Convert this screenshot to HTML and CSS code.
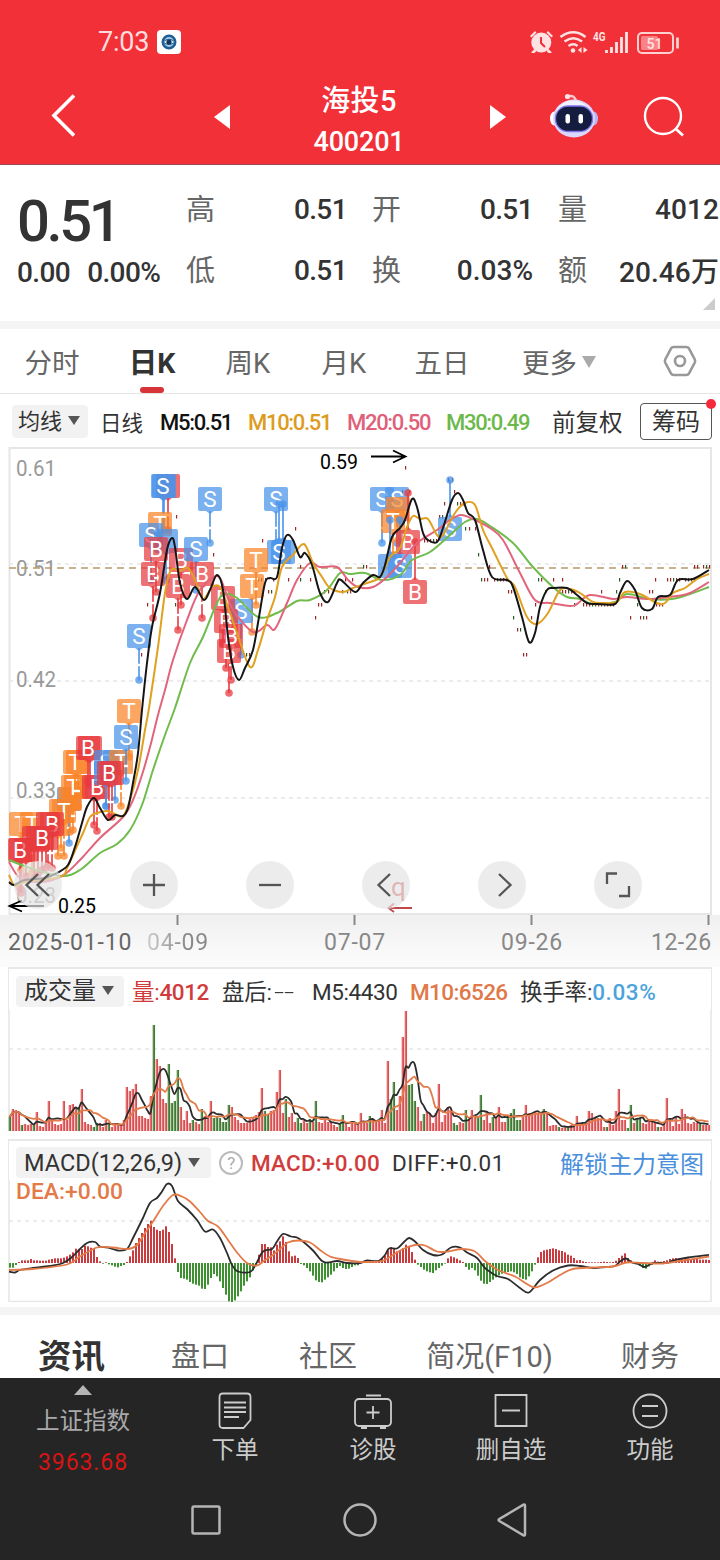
FILE: index.html
```html
<!DOCTYPE html>
<html lang="zh-CN">
<head>
    <meta charset="UTF-8">
    <meta name="viewport" content="width=device-width, initial-scale=1.0">
    <title>海投5 400201</title>
    <link rel="stylesheet" href="styles.css">
</head>
<body>
    <header class="top">
        <div class="status">
            <span class="clock">7:03</span>
            <svg class="app-badge" width="24" height="24" viewBox="0 0 24 24">
                <rect width="24" height="24" rx="4" fill="#fff"/>
                <circle cx="12" cy="12" r="6.2" fill="#a9cbe6" stroke="#1d5f94" stroke-width="2.6"/>
                <path d="M6 12q6-5.500 12 0q-6 5-12 0z" fill="#dbe9f5" stroke="#1d5f94"/>
                <circle cx="12" cy="12" r="2.600" fill="#12365c"/>
            </svg>
            <svg class="status-icons" width="150" height="26" viewBox="530 28 150 26">
                <g fill="#ffe3e3">
                    <circle cx="541.300" cy="41.500" r="10"/>
                    <path d="M530 35l5-5 1.500 1.500-5 5zM553 35l-5-5-1.500 1.500 5 5zM531.500 51l3-3 2 2-2 2h-3zM551.500 51l-3-3-2 2 2 2h3z"/>
                </g>
                <path d="M541 36v6l4 4" fill="none" stroke="#f23038" stroke-width="2"/>
                <g fill="none" stroke="#ffe3e3" stroke-width="2.600">
                    <path d="M560.500 36q13-9.500 25 0M564.500 40.500q9-6.500 17.500 0M568.500 45q5-3.500 9 0"/>
                </g>
                <circle cx="573" cy="49.500" r="2.300" fill="#ffe3e3"/>
                <path d="M578 49l3.500-3v6zM587.500 49l-4-3v6z" fill="#ffe3e3"/>
                <text x="593" y="39.500" class="net-label" textLength="12.500" lengthAdjust="spacingAndGlyphs">4G</text>
                <path d="M606.500 52v-3M611.500 52v-6M616.500 52v-11M621.500 52v-16M626.500 52v-21" stroke="#ffe3e3" stroke-width="2.800"/>
                <rect x="638" y="32" width="35" height="20" rx="4" fill="none" stroke="#ffd0d0" stroke-width="2"/>
                <rect x="641" y="35" width="17" height="14" rx="1.500" fill="#fb8388"/>
                <path d="M677.500 36.500v11" stroke="#ffd0d0" stroke-width="2.800"/>
                <text x="646.500" y="47.500" class="battery-label" textLength="16" lengthAdjust="spacingAndGlyphs">51</text>
            </svg>
        </div>
        <nav class="title-bar">
            <svg class="back" width="28" height="46" viewBox="0 0 28 46"><path d="M25 3.500L5 23.500 25 43.500" fill="none" stroke="#fff" stroke-width="3.600"/></svg>
            <svg width="16" height="24" viewBox="0 0 16 24"><path d="M16 0v24L0 12z" fill="#fff"/></svg>
            <div class="stock">
                <div class="stock-name">海投5</div>
                <div class="stock-code">400201</div>
            </div>
            <svg class="next" width="16" height="24" viewBox="0 0 16 24"><path d="M0 0v24l16-12z" fill="#fff"/></svg>
            <svg class="robot" width="50" height="46" viewBox="0 0 50 46">
                <path d="M19 4.500q7-2 8 5" fill="none" stroke="#ffc4cc" stroke-width="2.500"/>
                <circle cx="18.500" cy="4.500" r="2.600" fill="#ffe0e4"/>
                <ellipse cx="5.500" cy="26.500" rx="4.500" ry="7" fill="#fff"/>
                <ellipse cx="44.500" cy="26.500" rx="4.500" ry="7" fill="#b9b5f5"/>
                <ellipse cx="25" cy="26.500" rx="21" ry="19" fill="#dcd8fb"/>
                <ellipse cx="24" cy="23.500" rx="17" ry="15" fill="#f1f3ff"/>
                <rect x="6.500" y="14" width="37" height="25.500" rx="12.500" fill="#141d3f" stroke="#7d74ec" stroke-width="1.300"/>
                <rect x="16.500" y="22" width="4.500" height="9.500" rx="2.200" fill="#fff"/>
                <rect x="29.500" y="22" width="4.500" height="9.500" rx="2.200" fill="#fff"/>
            </svg>
            <svg class="search" width="42" height="42" viewBox="0 0 42 42"><g fill="none" stroke="#fff" stroke-width="2.400"><circle cx="20" cy="20" r="18"/><path d="M33 33l7 6.500" stroke-width="2.800"/></g></svg>
        </nav>
    </header>

    <section class="quote">
        <div class="price">
            <div class="price-now">0.51</div>
            <div class="price-change"><span>0.00</span><span>0.00%</span></div>
        </div>
        <dl class="stats">
            <dt>高</dt><dd>0.51</dd><dt>开</dt><dd>0.51</dd><dt>量</dt><dd class="vol">4012</dd>
            <dt>低</dt><dd>0.51</dd><dt>换</dt><dd class="pct">0.03%</dd><dt>额</dt><dd class="vol">20.46万</dd>
        </dl>
        <i class="corner"></i>
    </section>

    <nav class="periods">
        <span>分时</span>
        <span class="active">日K</span>
        <span>周K</span>
        <span>月K</span>
        <span>五日</span>
        <span>更多<i class="caret"></i></span>
        <svg width="34" height="32" viewBox="0 0 34 32"><g fill="none" stroke="#999" stroke-width="2.600"><path d="M10.500 2h13q1.500 0 2.300 1.200l6 11.300q.7 1.500 0 3l-6 11.300q-.8 1.200-2.300 1.200h-13q-1.500 0-2.300-1.200l-6-11.300q-.7-1.500 0-3l6-11.300Q9 2 10.500 2z"/><circle cx="17" cy="16" r="5"/></g></svg>
    </nav>

    <div class="legend">
        <span class="chip">均线<i class="caret dark"></i></span>
        <span class="cn">日线</span>
        <span class="m5">M5:0.51</span>
        <span class="m10">M10:0.51</span>
        <span class="m20">M20:0.50</span>
        <span class="m30">M30:0.49</span>
        <span class="adjust">前复权</span>
        <span class="chips-btn">筹码</span>
    </div>

    <section class="kline">
        <svg id="kline" width="704" height="468" viewBox="8 447 704 468"></svg>
        <div class="tools">
            <span><svg width="34" height="34" viewBox="0 0 34 34"><path d="M17 6L5.500 17 17 28M28 6L16.500 17 28 28"/></svg></span>
            <span><svg width="34" height="34" viewBox="0 0 34 34"><path d="M17 6v22M6 17h22"/></svg></span>
            <span><svg width="34" height="34" viewBox="0 0 34 34"><path d="M6 17h22"/></svg></span>
            <span><svg width="34" height="34" viewBox="0 0 34 34"><path d="M21 6L9.500 17 21 28"/></svg></span>
            <span><svg width="34" height="34" viewBox="0 0 34 34"><path d="M14 6l11.500 11L14 28"/></svg></span>
            <span><svg width="34" height="34" viewBox="0 0 34 34"><path d="M16 5.500H6V16M18 28h10V18"/></svg></span>
        </div>
    </section>
    <div class="dates">
        <span class="first">2025-01-10</span><span class="faded">04-09</span><span>07-07</span><span>09-26</span><span class="last">12-26</span>
    </div>

    <section class="panel volume">
        <div class="panel-head">
            <span class="chip">成交量<i class="caret dark"></i></span>
            <span class="red vol-now"><b>量:</b>4012</span>
            <span class="after">盘后:<em>--</em></span>
            <span class="vol-m5">M5:4430</span>
            <span class="orange vol-m10">M10:6526</span>
            <span class="turnover">换手率:<em>0.03%</em></span>
        </div>
        <svg id="volume" width="704" height="122" viewBox="8 1010 704 122"></svg>
    </section>

    <section class="panel macd">
        <div class="panel-head">
            <span class="chip macd-chip">MACD(12,26,9)<i class="caret dark"></i></span>
            <span class="help">?</span>
            <span class="red macd-val">MACD:+0.00</span>
            <span class="diff">DIFF:+0.01</span>
            <a class="unlock">解锁主力意图</a>
        </div>
        <svg id="macd" width="704" height="122" viewBox="8 1180 704 122"></svg>
    </section>

    <nav class="info-tabs">
        <span class="active">资讯</span><span>盘口</span><span>社区</span><span>简况(F10)</span><span>财务</span>
    </nav>

    <footer class="bottom">
        <div class="actions">
            <div class="index">
                <i class="up"></i>
                <span>上证指数</span>
                <strong>3963.68</strong>
            </div>
            <div class="action">
                <svg width="40" height="40" viewBox="0 0 40 40"><path d="M8 3.500h24q3.500 0 3.500 3.500v23l-7 8H8q-3.500 0-3.500-3.500V7Q4.500 3.500 8 3.500zM9 12.500h22M9 17.500h22M9 22h22M9 27h15"/></svg>
                <span>下单</span>
            </div>
            <div class="action">
                <svg width="40" height="40" viewBox="0 0 40 40"><rect x="2" y="9" width="36" height="27" rx="4"/><path d="M13 5.500h15M20 16v13M13.500 22.500h13M8 38h6M27 38h6"/></svg>
                <span>诊股</span>
            </div>
            <div class="action">
                <svg width="40" height="40" viewBox="0 0 40 40"><path d="M4.500 5h31v31h-31zM11 20.500h18"/></svg>
                <span>删自选</span>
            </div>
            <div class="action">
                <svg width="40" height="40" viewBox="0 0 40 40"><circle cx="20" cy="21" r="16.500"/><path d="M12 16h16M12 26h16"/></svg>
                <span>功能</span>
            </div>
        </div>
        <div class="system-nav">
            <svg width="34" height="34" viewBox="0 0 34 34"><rect x="3.500" y="3.500" width="27" height="27" rx="1.500"/></svg>
            <svg width="34" height="34" viewBox="0 0 34 34"><circle cx="17" cy="17" r="15.500"/></svg>
            <svg width="34" height="34" viewBox="0 0 34 34"><path d="M28 2.500v29q0 1.500-1.500.8L2.300 18q-1.500-1 0-2L26.500 1.700Q28 1 28 2.500z"/></svg>
        </div>
    </footer>

    <script src="script.js"></script>
</body>
</html>
```

FILE: styles.css
```css
* {
    box-sizing: border-box;
}
body {
    margin: 0;
    width: 720px;
    height: 1560px;
    overflow: hidden;
    background-color: #fff;
    color: #333;
    font-family: Roboto, 'Noto Sans CJK SC', sans-serif;
    white-space: nowrap;
}
svg {
    display: block;
    flex: none;
}
em, b, i {
    font-style: normal;
    font-weight: inherit;
}

/* header */
.top {
    height: 165px;
    background-color: #f23038;
    border-bottom: 1px solid #9c4a50;
    color: #fff;
}
.status {
    display: flex;
    align-items: center;
    height: 84px;
    padding: 0 40px 0 98px;
}
.clock {
    width: 59px;
    font-size: 27px;
    letter-spacing: -0.2px;
    color: #ffdcdd;
}
.status-icons {
    margin-left: auto;
}
.net-label {
    font-size: 13.500px;
    font-weight: 700;
    fill: #ffe3e3;
}
.battery-label {
    font-size: 15px;
    font-weight: 500;
    fill: #ffe3e3;
}
.title-bar {
    display: grid;
    grid-template-columns: 130px 184px 90px 130px 80px 106px;
    grid-template-rows: 66px;
    justify-items: center;
    align-items: center;
    height: 66px;
}
.title-bar .back {
    margin: -4px 4px 0 0;
}
.title-bar .next {
    justify-self: end;
    margin-right: 28px;
}
.title-bar .robot {
    margin-top: -4px;
}
.title-bar .search {
    margin-right: 6px;
}
.stock {
    height: 82px;
    margin-top: 9px;
    text-align: center;
    font-weight: 500;
    line-height: 41px;
}
.stock-name {
    font-size: 29px;
    letter-spacing: 0.3px;
}
.stock-code {
    font-size: 27px;
    letter-spacing: -0.2px;
}

/* quote */
.quote {
    position: relative;
    display: flex;
    height: 164px;
    border-bottom: 8px solid #f4f4f4;
}
.price {
    width: 185px;
    padding: 24px 0 0 17px;
}
.price-now {
    height: 64px;
    line-height: 64px;
    font-size: 58px;
    font-weight: 500;
    letter-spacing: -3.4px;
}
.price-change {
    display: flex;
    gap: 17px;
    line-height: 39px;
    font-size: 28px;
    letter-spacing: -0.600px;
    font-weight: 500;
}
.stats {
    display: grid;
    grid-template-columns: 30px 132px 54px 132px 54px 132px;
    grid-template-rows: 61px 61px;
    align-items: center;
    margin: 13px 0 0;
}
.stats dt {
    color: #666;
    justify-self: end;
    font-size: 29px;
    margin-top: -3px;
}
.stats dd {
    margin: 1px 0 0;
    text-align: right;
    font-weight: 500;
    font-size: 28px;
    letter-spacing: -0.600px;
}
.stats .pct {
    letter-spacing: 0;
}
.stats .vol {
    letter-spacing: 0.100px;
}
.corner {
    position: absolute;
    right: 5px;
    bottom: 11px;
    border-left: 12px solid transparent;
    border-bottom: 12px solid #ccc;
}

/* tabs */
.periods {
    display: grid;
    grid-template-columns: 104px 96px 96px 96px 100px 134px 94px;
    height: 65px;
    border-bottom: 1px solid #e5e5e5;
    font-size: 27.500px;
    line-height: 69px;
    color: #666;
    text-align: center;
}
.periods .active {
    position: relative;
    height: 64px;
    color: #333;
    font-weight: 700;
    font-size: 28.500px;
}
.periods .active::after {
    content: '';
    position: absolute;
    left: 36px;
    bottom: 0;
    width: 24px;
    height: 6px;
    border-radius: 3px;
    background-color: #d63438;
}
.periods svg {
    margin: 16px 0 0 37px;
}
.caret {
    display: inline-block;
    margin-left: 5px;
    border: 7px solid transparent;
    border-top: 12px solid #aaa;
    border-bottom: 0;
    vertical-align: 5px;
}
.caret.dark {
    border-width: 9px 6.500px 0;
    border-top-color: #555;
    vertical-align: 4px;
    margin-left: 6px;
}
.legend {
    display: grid;
    grid-template-columns: 88px 60px 88px 99px 99px 106px 88px 72px;
    align-items: center;
    height: 53px;
    padding-left: 12px;
    padding-top: 1px;
    font-size: 22px;
    font-weight: 500;
    letter-spacing: -1.300px;
}
.chip {
    height: 33px;
    line-height: 33px;
    border-radius: 4px;
    background-color: #f2f2f2;
    font-size: 22px;
    font-weight: 400;
    letter-spacing: 0;
}
.legend .chip {
    width: 76px;
    padding-left: 6px;
}
.legend .cn {
    font-weight: 400;
    letter-spacing: 0;
    font-size: 21.500px;
}
.legend .m5, .legend .m10, .legend .m20, .legend .m30 {
    padding-top: 2px;
}
.m5 {
    color: #111;
}
.m10 {
    color: #dd9c20;
}
.m20 {
    color: #e0607a;
}
.m30 {
    color: #6cb84a;
}
.adjust {
    font-size: 23.500px;
    font-weight: 400;
    letter-spacing: 0;
}
.chips-btn {
    position: relative;
    height: 37px;
    line-height: 36px;
    border: 1px solid #555;
    border-radius: 4px;
    text-align: center;
    font-size: 24px;
    font-weight: 400;
    letter-spacing: 0;
}
.chips-btn::after {
    content: '';
    position: absolute;
    top: -5px;
    right: -5px;
    width: 10px;
    height: 10px;
    border-radius: 50%;
    background-color: #f6283a;
}

/* chart */
.kline {
    position: relative;
    padding-left: 8px;
    height: 468px;
}
.tools {
    position: absolute;
    left: 14px;
    top: 414px;
    display: flex;
    gap: 68px;
}
.tools span {
    display: flex;
    align-items: center;
    justify-content: center;
    width: 48px;
    height: 48px;
    border-radius: 50%;
    background-color: rgba(228, 228, 228, 0.7);
}
.tools path {
    fill: none;
    stroke: #555;
    stroke-width: 2.300;
}
.axis-text {
    font-size: 22.500px;
    fill: #999;
}
.note {
    font-size: 20px;
    fill: #000;
}
.q-note {
    font-size: 26px;
    fill: #d64a4a;
}
.tag-text {
    font-size: 22.500px;
    fill: #fff;
    text-anchor: middle;
}
.dates {
    display: grid;
    grid-template-columns: 139px 177px 177px 150px 1fr;
    height: 52px;
    padding-left: 8px;
    padding-top: 13px;
    line-height: 30px;
    font-size: 23px;
    letter-spacing: 0.800px;
    color: #888;
    background: linear-gradient(#f0f0f0, #fbfbfb 90%);
}
.dates .first {
    color: #666;
}
.dates .last {
    letter-spacing: 0.500px;
}
.dates .faded {
    color: #999;
    background: linear-gradient(90deg, #ccc, #888 40px);
    background-clip: text;
    -webkit-background-clip: text;
    -webkit-text-fill-color: transparent;
}
.panel {
    margin-left: 8px;
    width: 704px;
}
.panel-head {
    display: grid;
    align-items: center;
    font-size: 22.500px;
    letter-spacing: -0.5px;
}
.volume .panel-head {
    grid-template-columns: 116px 90px 90px 98px 110px 1fr;
    height: 43px;
    padding: 4px 0 0 7px;
    border: 1px solid #e8e8e8;
    border-width: 2px 1px 0;
}
.volume {
    height: 172px;
}
.volume .chip {
    width: 108px;
    padding-left: 8px;
    font-size: 24px;
    height: 31px;
    line-height: 31px;
}
.volume b, .after, .turnover {
    font-size: 22.500px;
    font-weight: 400;
    letter-spacing: -0.200px;
}
.vol-now, .after, .turnover {
    margin-top: -3px;
}
.red {
    color: #d03c3c;
    font-weight: 500;
}
.orange {
    color: #e07848;
    font-weight: 500;
}
.turnover em {
    color: #4ba3dc;
    font-weight: 500;
    letter-spacing: 0.600px;
}
.after em {
    display: inline-block;
    margin-left: 2px;
    font-weight: 300;
    transform: scaleX(1.6);
    transform-origin: left;
}
.vol-m5 {
    letter-spacing: -0.400px;
}
.vol-m10 {
    letter-spacing: -0.600px;
}
.macd .panel-head {
    grid-template-columns: 203px 32px 141px 168px 1fr;
    height: 41px;
    padding: 4px 0 0 7px;
    border: 1px solid #e8e8e8;
    border-width: 2px 1px 0;
}
.macd {
    height: 168px;
}
.macd .macd-chip {
    width: 195px;
    height: 31px;
    line-height: 32px;
    padding-left: 8px;
    font-size: 23.500px;
    letter-spacing: 0;
}
.help {
    width: 24px;
    height: 24px;
    border: 2px solid #bbb;
    border-radius: 50%;
    line-height: 20px;
    text-align: center;
    font-size: 17px;
    color: #aaa;
}
.macd-val {
    letter-spacing: 0.200px;
}
.diff {
    letter-spacing: 0.500px;
}
.unlock {
    color: #4a8fdc;
    font-size: 24px;
    letter-spacing: 0;
}

/* info tabs */
.info-tabs {
    display: grid;
    grid-template-columns: 143px 114px 142px 181px 1fr;
    height: 71px;
    border-top: 8px solid #f4f4f4;
    text-align: center;
    font-size: 29px;
    line-height: 84px;
    color: #666;
}
.info-tabs .active {
    font-size: 33.500px;
    font-weight: 700;
    color: #333;
}

/* bottom */
.bottom {
    position: relative;
    height: 182px;
    background-color: #252525;
    color: #ccc;
}
.actions {
    display: grid;
    grid-template-columns: 166px 138px 138px 138px 140px;
    height: 104px;
    text-align: center;
    font-size: 23.500px;
}
.index {
    display: flex;
    flex-direction: column;
    align-items: center;
    padding-top: 7px;
}
.index .up {
    border: 9px solid transparent;
    border-bottom: 10px solid #b5b5b5;
    border-top: 0;
}
.index span {
    line-height: 30px;
    margin-top: 11px;
    color: #aaa;
}
.index strong {
    margin-top: 12px;
    line-height: 30px;
    font-size: 23px;
    font-weight: 400;
    letter-spacing: 0.900px;
    color: #d81414;
}
.action {
    display: flex;
    flex-direction: column;
    align-items: center;
    padding-top: 12px;
}
.action span {
    line-height: 36px;
    margin-top: 2px;
}
.action svg {
    fill: none;
    stroke: #ccc;
    stroke-width: 1.800;
}
.system-nav {
    display: flex;
    gap: 120px;
    padding: 21px 0 0 189px;
}
.system-nav svg {
    fill: none;
    stroke: #b5b5b5;
    stroke-width: 2.500;
}
```

FILE: script.js
```js
const NS = 'http://www.w3.org/2000/svg';

function add(parent, name, attrs, text) {
    const el = document.createElementNS(NS, name);
    for (const key in attrs) el.setAttribute(key, attrs[key]);
    if (text) el.textContent = text;
    parent.appendChild(el);
    return el;
}

// "x,y x,y ..." -> smooth path
function smooth(points) {
    const p = points.trim().split(/\s+/).map(s => s.split(',').map(Number));
    let d = `M${p[0]}`;
    for (let i = 0; i < p.length - 1; i++) {
        const a = p[i - 1] || p[i], b = p[i], c = p[i + 1], e = p[i + 2] || c;
        d += `C${b[0] + (c[0] - a[0]) / 6},${b[1] + (c[1] - a[1]) / 6} ${c[0] - (e[0] - b[0]) / 6},${c[1] - (e[1] - b[1]) / 6} ${c}`;
    }
    return d;
}

function line(svg, points, color, width = 2) {
    add(svg, 'path', { d: smooth(points), fill: 'none', stroke: color, 'stroke-width': width, 'stroke-linejoin': 'round' });
}

function dashed(svg, y, color = '#e6e6e6', dash = '4 4') {
    add(svg, 'path', { d: `M9 ${y}H710`, stroke: color, 'stroke-width': 1.6, 'stroke-dasharray': dash });
}

const barX = i => 9.5 + i * 3;

// ---- K line ----
const kline = document.getElementById('kline');
add(kline, 'path', { d: 'M9.5 915V448H711V915M9 914H711', fill: 'none', stroke: '#e6e6e6', 'stroke-width': 2 });
dashed(kline, 564, '#e8e8e8');
dashed(kline, 681);
dashed(kline, 798);
[['0.61', 475.5], ['0.51', 576], ['0.42', 687], ['0.33', 798], ['0.23', 903]].forEach(([t, y]) => {
    add(kline, 'text', { x: 16, y, class: 'axis-text', textLength: 40, lengthAdjust: 'spacingAndGlyphs' }, t);
});
dashed(kline, 568, '#b59a6a', '7 5');

// small daily price marks, y level: x positions
const marks = {
    468: [405], 480: [448, 452], 492: [409, 402, 454], 504: [444, 457, 460, 463], 517: [439, 442, 176],
    529: [295, 465, 469, 475], 541: [262, 278, 424, 427, 430, 433, 436], 555: [213, 478], 567: [300, 363, 366, 489, 622, 625, 694, 697, 703, 706, 709],
    580: [258, 261, 265, 273, 288, 300, 310, 345, 352, 481, 484, 487, 494, 497, 500, 503, 506, 538, 541, 553, 562, 619, 655, 667, 670, 673, 676, 679, 685, 688, 691, 694],
    592: [268, 271, 324, 328, 342, 347, 350, 508, 511, 545, 559, 562, 565, 568, 571, 574, 601, 616, 649, 652],
    605: [147, 175, 318, 321, 535, 574, 583, 586, 589, 592, 595, 598, 601, 604, 607, 610, 613, 637, 656, 659, 662],
    618: [315, 513, 531, 630, 640, 643, 646], 630: [517, 520], 655: [141, 246, 249, 523, 526]
};
for (const y in marks) {
    marks[y].forEach((x, i) => add(kline, 'rect', { x, y: y - 2, width: 1.2, height: 3.5, fill: i % 4 === 1 ? '#2b5b2b' : '#9c2626' }));
}

// trade tags: type, centre x, centre y, end of stem y; a tag lying under another one has a lower-case type and no letter
const tags = [
    ['T', 21, 824, 870], ['b', 21, 850, 893], ['T', 32, 824, 872], ['t', 58, 824, 856], ['b', 26, 850, 876], ['B', 20, 850, 888],
    ['t', 61, 811, 848], ['s', 69, 799, 843], ['t', 70, 799, 832], ['T', 64, 811, 856], ['t', 76, 787, 806], ['T', 73, 787, 830],
    ['b', 48, 824, 865], ['B', 52, 824, 868], ['b', 34, 838, 878], ['b', 38, 838, 874], ['b', 46, 838, 868], ['B', 42, 838, 870],
    ['t', 78, 762, 806], ['T', 75, 762, 806], ['b', 90, 748, 785], ['B', 88, 748, 782], ['S', 106, 762, 806], ['s', 115, 762, 800], ['T', 121, 762, 806],
    ['b', 94, 787, 825], ['B', 97, 787, 831], ['s', 106, 773, 806], ['b', 112, 773, 817], ['B', 109, 773, 817],
    ['T', 129, 711, 757], ['S', 126, 737, 781], ['S', 139, 636, 680],
    ['b', 168, 486, 530], ['s', 164, 486, 530], ['S', 163, 486, 530], ['T', 160, 524, 530], ['S', 151, 535, 580], ['s', 166, 541, 580],
    ['B', 153, 574, 618], ['B', 181, 560, 605], ['B', 178, 586, 630], ['B', 156, 549, 592], ['S', 196, 549, 590], ['B', 202, 574, 618], ['S', 210, 499, 543],
    ['S', 276, 499, 543], ['s', 283, 552, 504], ['S', 279, 552, 504], ['T', 252, 586, 632], ['T', 256, 560, 605],
    ['S', 241, 611, 655], ['B', 223, 598, 643], ['B', 226, 621, 668], ['B', 229, 651, 693], ['B', 231, 636, 680],
    ['S', 382, 499, 543], ['S', 397, 499, 543], ['t', 398, 509, 540], ['T', 393, 521, 555], ['s', 390, 566, 520], ['S', 400, 566, 520],
    ['B', 408, 542, 493], ['B', 415, 592, 542], ['S', 450, 529, 480]
];
const tagColors = { B: '#e83a3f', T: '#fb8428', S: '#4a93ea' };
tags.forEach(([kind, x, y, end]) => {
    const type = kind.toUpperCase();
    const fill = tagColors[type];
    const dir = end > y ? 1 : -1;
    const g = add(kline, 'g', {});
    add(g, 'path', { d: `M${x} ${y + 12 * dir}V${end}`, stroke: fill, 'stroke-width': 1.6 });
    add(g, 'circle', { cx: x, cy: end, r: 3.8, fill, 'fill-opacity': 0.75 });
    add(g, 'rect', { x: x - 12, y: y - 12, width: 24, height: 24, rx: 2, fill, 'fill-opacity': 0.72 });
    add(g, 'path', { d: `M${x - 4} ${y + 12 * dir}h8l-4 ${3 * dir}z`, fill, 'fill-opacity': 0.72 });
    if (dir === 1 && end - y > 40) add(g, 'path', { d: `M${x - 2} ${y + 29}h4`, stroke: '#fff', 'stroke-width': 2.4 });
    if (kind === type) add(g, 'text', { x, y: y + 8, class: 'tag-text' }, type);
});

line(kline, `9,860 30,868 62,876 80,870 100,853 117,844 130,830 142,805 153,770 165,735 175,708 190,663 203,637 217,603 225,594 237,598 258,617 277,613
    297,601 310,600 327,590 340,573 350,574 365,573 382,580 400,575 412,560 430,552 450,535 465,522 477,519 490,526 513,543 533,567 553,587 567,597
    580,599 593,604 615,602 627,594 650,599 672,599 690,594 709,587`, '#6fbc4c');
line(kline, `9,862 20,878 40,882 62,876 80,860 100,838 123,817 133,800 142,775 150,747 158,715 165,690 173,660 187,620 200,590 217,576 225,590 233,610
    253,632 267,625 275,629 287,603 297,580 310,563 320,567 337,567 348,580 358,587 373,587 387,577 400,563 417,543 437,530 450,520 461,515 473,519
    490,528 503,540 520,573 535,600 550,603 570,606 577,604 590,595 613,599 627,597 650,599 677,596 690,593 709,582`, '#e2647c');
line(kline, `9,875 15,886 25,882 60,877 67,868 73,855 83,833 90,817 97,813 107,811 115,814 123,816 130,800 138,770 145,730 149,708 158,647 165,593
    171,570 180,571 188,568 195,580 203,599 212,587 220,587 228,607 237,633 250,667 258,650 267,620 275,597 282,567 293,555 304,544 313,563 322,577
    330,588 343,592 353,588 367,583 380,577 390,557 400,548 407,527 413,516 420,519 428,519 437,535 443,535 455,513 465,503 475,505 483,530 493,550
    507,578 515,587 527,617 537,624 548,613 560,590 570,589 580,593 593,602 603,603 617,602 625,592 640,594 657,603 665,603 673,593 685,588 697,579 709,574`, '#e0a020');
line(kline, `9,882 14,885 25,880 45,878 57,873 68,865 75,847 82,823 87,807 94,798 100,808 108,820 115,815 123,816 128,808 133,783 138,753 142,710 147,663
    152,627 160,593 167,550 172,538 175,547 180,583 187,599 195,587 204,600 210,590 217,575 223,590 228,637 233,667 239,680 245,668 253,650 259,617
    265,583 270,578 277,577 282,548 287,535 293,540 300,557 305,553 312,565 320,593 328,602 337,583 341,580 355,592 363,583 373,575 380,577 385,565
    392,537 400,528 405,520 412,499 417,507 423,533 428,540 437,542 443,528 452,500 458,493 463,500 468,513 475,520 483,550 492,577 507,580 513,587
    522,617 529,642 535,633 540,607 547,590 553,588 567,588 577,595 587,603 597,604 615,604 620,593 627,581 635,590 642,608 652,609 658,597 670,595 678,580 693,579 709,570`, '#151515');

// high / low notes
add(kline, 'text', { x: 320, y: 468.5, class: 'note', textLength: 38, lengthAdjust: 'spacingAndGlyphs' }, '0.59');
add(kline, 'path', { d: 'M371 456.500H405M393 450.500L405.500 456.500 393 462.500', fill: 'none', stroke: '#000', 'stroke-width': 1.8 });
add(kline, 'text', { x: 58, y: 912.500, class: 'note', textLength: 38, lengthAdjust: 'spacingAndGlyphs' }, '0.25');
add(kline, 'path', { d: 'M44 906H10M22 900.500L9.500 906 22 911.500', fill: 'none', stroke: '#000', 'stroke-width': 1.8 });
add(kline, 'text', { x: 391, y: 896, class: 'q-note' }, 'q');
add(kline, 'path', { d: 'M412 908H388.500M394 903.500L388.500 908 394 912', fill: 'none', stroke: '#c04848', 'stroke-width': 1.8 });

// ---- volume, "g" marks a falling day ----
const volumes = `14g 22 21 19 6g 7 6 7 7g 19 5 4 9 30 11 7 6 7 30 11 26 27 24 24g 42 9 7 6 4g 8g 8 4 11 7g 4 8 6 6 11 44 40 42 47 15 15 13 12 35 106g 72
    65 32 28 67g 28g 30g 61g 24 11 20 8 11g 9 7 22g 15 13 30 13g 14g 13g 9g 9g 26g 24 14 11 8 8 8 12 14 16 19 43 20g 16g 20 21 39 61 18 32g 14 18 9 13g 8g 12 8
    12g 9 30g 9 8 11 9 9 6 4 8g 16g 8 4 9 7 6 18 8 8 15g 11 9 10 21 8 70 32g 49g 21 35 94 120 46g 47g 30g 24 10 17g 19 18 8 18 47 9 16 24 21 8g 6g
    9 8 21g 11 21 16 15g 36g 11 19 8 14g 14 24 9 9 14g 18g 22g 11g 11g 14 26 18 18 19 18 18 22g 18 5 6 6 4g 3 4 4g 6 6 15 7 6 8 20 18 13 13 12 4 4g
    13 6 20 42 11 11 3g 26g 8 13g 13g 8 7 12 9 8 4g 4 7 33 12 5 14 7 22 17 8 7 9 8 8g 6 6 6`.trim().split(/\s+/);
const volume = document.getElementById('volume');
add(volume, 'path', { d: 'M9 1010V1131M711 1010V1131', stroke: '#e6e6e6', 'stroke-width': 1.6 });
dashed(volume, 1049);
volumes.forEach((v, i) => {
    const h = parseInt(v);
    const down = v.endsWith('g');
    add(volume, 'rect', { x: barX(i) - 1, y: 1131 - h, width: 2.6, height: h, fill: down ? '#8fb57c' : '#f59c9c' });
    add(volume, 'rect', { x: barX(i), y: 1131 - h, width: 1.3, height: h, fill: down ? '#2f6a2a' : '#cf3f42' });
});
function average(n) {
    const nums = volumes.map(v => parseInt(v));
    return nums.map((v, i) => {
        const part = nums.slice(Math.max(0, i - n + 1), i + 1);
        return `${barX(i)},${1131 - part.reduce((a, b) => a + b) / part.length}`;
    }).join(' ');
}
line(volume, average(5), '#2c2c2c', 1.8);
line(volume, average(10), '#e37a48', 1.8);

// ---- MACD ----
const hist = [-14, -14, -6, 3, 8, 8, 8, 12, 8, 8, 7, 7, 7, 10, 12, 14, 14, 14, 16, 20, 25, 32, 43, 40, 42, 52, 50, 46, 42, 18, 5, -2, 2, -4, -7, -11, -13, -9, -6, 3,
    20, 38, 60, 75, 90, 105, 117, 127, 108, 100, 96, 100, 110, 93, 57, 14, -27, -45, -47, -50, -57, -62, -65, -68, -77, -78, -65, -45, -33, -40,
    -55, -75, -95, -115, -117, -112, -100, -85, -68, -55, -43, -22, -8, 25, 57, 57, 48, 47, 38, 55, 65, 80, 63, 35, 20, 22, 15, -3, -7, -15,
    -25, -38, -52, -57, -58, -50, -43, -35, -25, -15, -9, -15, -18, -17, -12, -7, -7, 3, 7, 6, 5, 5, 6, 9, 14, 22, 38, 48, 42, 35,
    38, 45, 55, 48, 33, 10, -5, -12, -20, -25, -28, -30, -22, -15, -8, -2, 14, 20, 17, 13, 8, 3, -12, -20, -15, -22, -38, -53, -62, -63,
    -57, -50, -43, -37, -32, -30, -27, -25, -28, -33, -43, -48, -50, -40, -25, -5, 17, 33, 38, 40, 42, 44, 42, 38, 36, 32, 25, 22, 15, 8,
    9, 5, 3, 2, 2, 2, 2, 3, 4, 3, 2, 3, 7, 15, 22, 29, 15, 8, 3, -3, -8, -15, -17, -10, -6, 8, 4, 4, 6, 8, 12, 14, 15, 14, 12, 14, 14, 12, 12, 12, 10, 10, 10, 9].slice(0, 234);
const macd = document.getElementById('macd');
add(macd, 'path', { d: 'M9 1180V1301.500H711V1180', fill: 'none', stroke: '#e6e6e6', 'stroke-width': 1.6 });
dashed(macd, 1221);
hist.forEach((v, i) => {
    const h = Math.abs(v) / 3;
    add(macd, 'rect', { x: barX(i) - 0.5, y: v > 0 ? 1263 - h : 1263, width: 2, height: h, fill: v > 0 ? '#c83c40' : '#3d9130' });
});
add(macd, 'text', { x: 16, y: 1199, fill: '#e37a48', 'font-size': 22, 'font-weight': 500, textLength: 107, lengthAdjust: 'spacingAndGlyphs' }, 'DEA:+0.00');
line(macd, `9,1271.500 15,1272.500 20,1270 33,1268 50,1266 63,1263 72,1257 80,1249 87,1243 95,1242 100,1246.500 110,1248 118,1250.500 127,1249 133,1238 142,1220 150,1203
    157,1198 162,1191.500 167,1184 172,1186 178,1201 187,1209 197,1220 205,1231.500 213,1229.500 220,1238 227,1253 232,1265 238,1271.500 250,1272 256,1264 263,1251.500
    272,1249 277,1241.500 283,1234 291,1236.500 297,1237.500 303,1241.500 313,1250.500 322,1261 328,1262.500 337,1261 347,1263 360,1263 367,1260.500 378,1261 385,1255
    389,1248.500 397,1248.500 403,1243 409,1238 415,1241.500 423,1250 433,1255 442,1254.500 451,1247.500 460,1247.500 467,1252.500 477,1258 485,1268 497,1276 508,1279 520,1288
    529,1292.500 540,1280 553,1270.500 568,1265.500 580,1266 593,1268 605,1267 615,1266 620,1261.500 626,1258.500 632,1262.500 638,1264 645,1267 653,1263 667,1263 673,1260.500 688,1257.500 709,1255`, '#2c2c2c', 1.8);
line(macd, `9,1270 33,1269 67,1264.500 80,1256.500 97,1247.500 113,1247.500 128,1249 137,1245 145,1233 153,1221.500 163,1206 173,1195 182,1196.500 190,1201.500 200,1212 208,1221
    218,1226.500 228,1240 237,1252.500 247,1263 257,1265.500 265,1260 273,1255 280,1249 288,1242.500 298,1240.500 310,1242.500 320,1250 330,1256.500 343,1259.500 360,1262
    367,1262 382,1261 393,1255 403,1249 415,1245 425,1245.500 437,1251.500 448,1251.500 462,1249 475,1251.500 485,1261 498,1270 515,1276.500 527,1284 535,1287.500
    548,1282.500 560,1275 573,1269 593,1267.500 613,1266.500 627,1262.500 643,1263 663,1263.500 683,1260.500 709,1256.500`, '#e37a48', 1.8);

// axis ticks under the price chart
const ticks = add(kline, 'g', { stroke: '#888', 'stroke-width': 2 });
kline.style.overflow = 'visible';
[177.5, 354.5, 531.5, 708.5].forEach(x => add(ticks, 'path', { d: `M${x} 915v10` }));
```
